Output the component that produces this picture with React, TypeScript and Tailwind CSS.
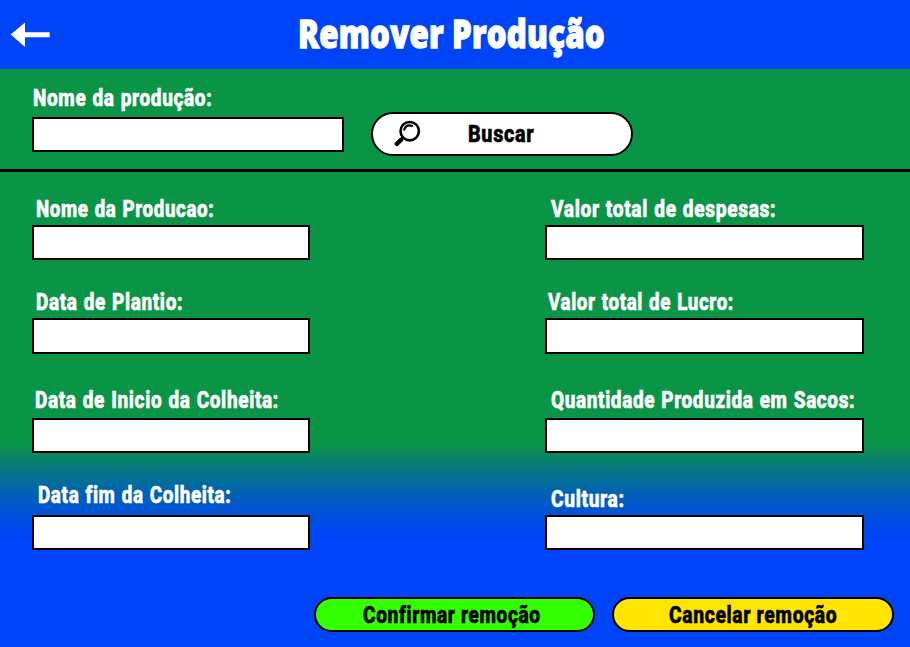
import { useLayoutEffect, useRef, useState } from "react";

type FitProps = { text: string; width: number; className?: string };

// Condenses a line of text horizontally so that it fills a given width.
function FitText({ text, width, className = "" }: FitProps) {
  const ref = useRef<HTMLSpanElement>(null);
  const [scale, setScale] = useState(1);
  useLayoutEffect(() => {
    if (ref.current) setScale(width / ref.current.offsetWidth);
  }, [text, width]);
  return (
    <span className={`block ${className}`} style={{ width }}>
      <span
        ref={ref}
        className="inline-block origin-left whitespace-nowrap align-top"
        style={{ transform: `scaleX(${scale})` }}
      >
        {text}
      </span>
    </span>
  );
}

type FieldProps = {
  label: string;
  width: number;
  className: string;
  labelClass: string;
  inputClass: string;
};

function Field({ label, width, className, labelClass, inputClass }: FieldProps) {
  return (
    <label className={`block ${className}`}>
      <FitText text={label} width={width} className={`h-6 text-white [-webkit-text-stroke:0.6px_white] ${labelClass}`} />
      <input
        className={`block border-2 border-black bg-white px-2 text-lg text-black outline-none ${inputClass}`}
      />
    </label>
  );
}

export default function App() {
  return (
    <div className="flex h-[647px] w-[910px] flex-col overflow-hidden bg-[linear-gradient(to_bottom,#0a9445_443px,#067881_469px,#0060b8_495px,#0044f8_534px)] font-['Roboto',sans-serif] text-[24px] leading-6 font-extrabold tracking-[0.8px] [word-spacing:1px]">
      <header className="flex h-[69px] shrink-0 bg-[#0044f8] text-white">
        <svg className="mt-[22px] ml-[10px] h-[26px] w-10" viewBox="0 0 40 26" fill="currentColor">
          <path d="M.7 12.6 15 .4v9.9h24.6v4.9H15V25Z" />
        </svg>
        <h1 className="mt-[9px] ml-[248px] font-['Open_Sans',sans-serif] text-[38.5px] leading-[48px] font-extrabold tracking-[0.3px] [-webkit-text-stroke:1.3px_white] [word-spacing:0px]">
          <FitText text="Remover Produção" width={307} />
        </h1>
      </header>

      <section className="flex h-[103px] shrink-0 border-b-3 border-black">
        <Field
          label="Nome da produção:"
          width={179}
          className="ml-8 pt-[17px]"
          labelClass="ml-px"
          inputClass="mt-[6.6px] h-[35px] w-[312px]"
        />
        <button className="mt-[43px] ml-[27px] flex h-11 w-[262px] rounded-full border-2 border-black bg-white text-black">
          <svg className="mt-[6px] ml-[21px] size-7" viewBox="0 0 28 28" fill="none" stroke="currentColor" strokeLinecap="round">
            <circle cx="15.7" cy="11.2" r="9.2" strokeWidth="2.6" />
            <path d="m8.9 17.9-2 2" strokeWidth="3" />
            <path d="m7 19.8-4.2 4" strokeWidth="4.4" />
            <path d="M10.2 9.6c1.4-3.5 4.4-4.8 7.8-3.7" strokeWidth="2.2" />
          </svg>
          <FitText text="Buscar" width={66} className="mt-2 ml-[46px] text-left [-webkit-text-stroke:0.6px_black]" />
        </button>
      </section>

      <main className="flex h-[400px] shrink-0">
        <div className="ml-8 w-[279px]">
          <Field label="Nome da Producao:" width={178} className="pt-[25px]" labelClass="ml-[3.5px]" inputClass="mt-[3.6px] h-[35.4px] w-[278.3px]" />
          <Field label="Data de Plantio:" width={147} className="pt-[30px]" labelClass="ml-[3.5px]" inputClass="mt-[4.4px] h-[35.4px] w-[278.3px]" />
          <Field label="Data de Inicio da Colheita:" width={244} className="pt-[34px]" labelClass="ml-[3px]" inputClass="mt-[6px] h-[35.4px] w-[278.3px]" />
          <Field label="Data fim da Colheita:" width={193.5} className="pt-[29.5px]" labelClass="ml-[5.5px]" inputClass="mt-[8.5px] h-[35px] w-[278.3px]" />
        </div>
        <div className="ml-[234px]">
          <Field label="Valor total de despesas:" width={225} className="pt-[25px]" labelClass="ml-[6px]" inputClass="mt-[3.6px] h-[35.4px] w-[318.6px]" />
          <Field label="Valor total de Lucro:" width={186} className="pt-[30px]" labelClass="ml-[3px]" inputClass="mt-[4.4px] h-[35.4px] w-[318.6px]" />
          <Field label="Quantidade Produzida em Sacos:" width={304} className="pt-[34px]" labelClass="ml-[6px]" inputClass="mt-[6px] h-[35.4px] w-[318.6px]" />
          <Field label="Cultura:" width={73.5} className="pt-[34px]" labelClass="ml-[5.5px]" inputClass="mt-[4px] h-[35px] w-[318.6px]" />
        </div>
      </main>

      <footer className="flex justify-end gap-[17px] pt-[25px] pr-4 text-black [-webkit-text-stroke:0.6px_black]">
        <button className="flex h-[35px] w-[281.5px] items-start rounded-full border-2 border-black bg-[#33ff00] pt-1 pl-[47px] text-left">
          <FitText text="Confirmar remoção" width={178} />
        </button>
        <button className="flex h-[35px] w-[282px] items-start rounded-full border-2 border-black bg-[#ffe500] pt-1 pl-[54.5px] text-left">
          <FitText text="Cancelar remoção" width={168} />
        </button>
      </footer>
    </div>
  );
}
